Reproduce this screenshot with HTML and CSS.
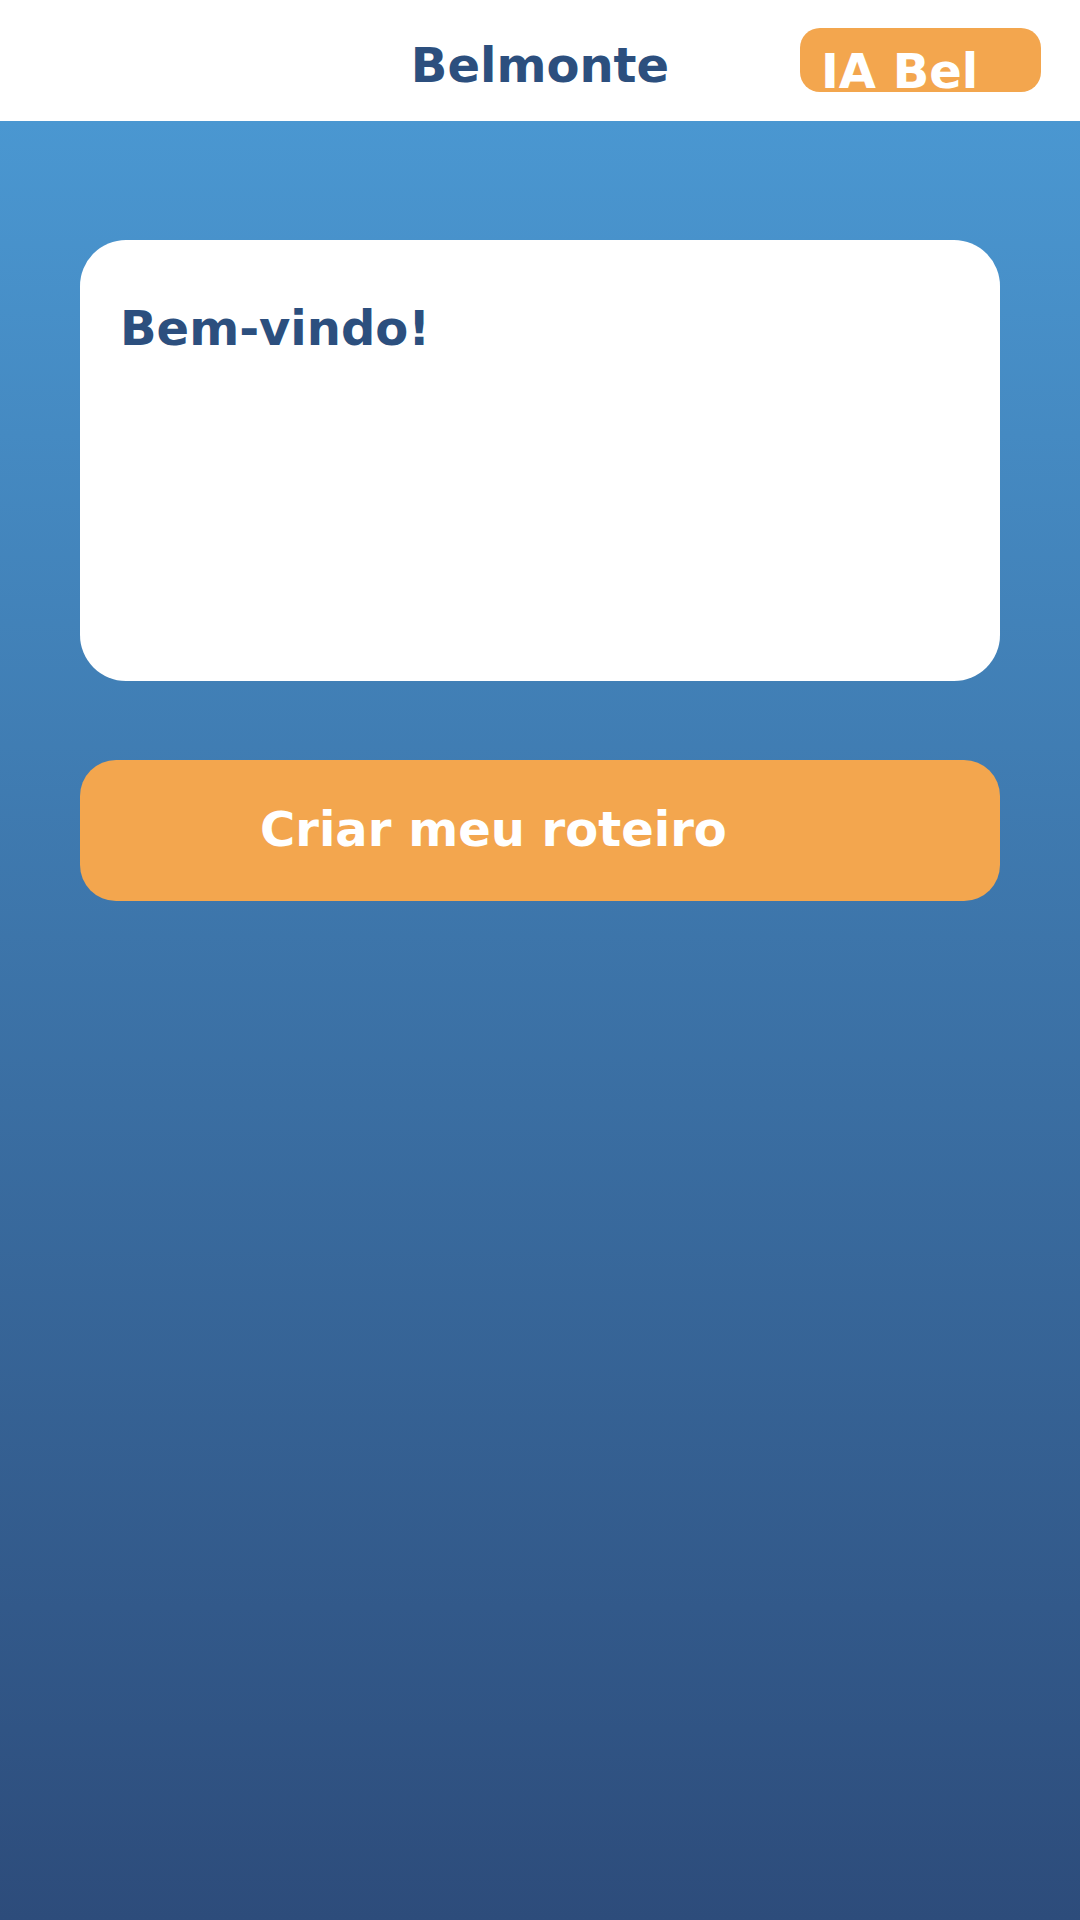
FILE: index.html
```html
<!DOCTYPE html>
<html lang="pt">
<head>
<meta charset="utf-8">
<title>Belmonte</title>
<link rel="stylesheet" href="styles.css">
</head>
<body>
<header class="topbar">
  <div class="spacer"></div>
  <h1 class="brand">Belmonte</h1>
  <div class="badge-wrap"><span class="badge">IA Bel</span></div>
</header>
<main class="content">
  <section class="card">
    <h2 class="card-title">Bem-vindo!</h2>
  </section>
  <button class="cta">Criar meu roteiro</button>
</main>
</body>
</html>
```
FILE: styles.css
```css
* { box-sizing: border-box; }
html, body { margin: 0; padding: 0; }
body {
  width: 1080px;
  min-height: 1920px;
  font-family: "DejaVu Sans", Verdana, sans-serif;
  background: linear-gradient(to bottom, #ffffff 0, #ffffff 121px, #4a97d1 121px, #2d4c7b 1920px);
  display: flex;
  flex-direction: column;
}
.topbar {
  height: 121px;
  background: #ffffff;
  display: grid;
  grid-template-columns: 1fr auto 1fr;
  align-items: start;
}
.brand {
  margin: 0;
  padding-top: 37px;
  font-size: 48px;
  font-weight: bold;
  color: #2c4f7e;
  line-height: normal;
  text-align: center;
}
.badge-wrap {
  display: flex;
  justify-content: flex-end;
  padding-top: 28px;
  padding-right: 39px;
}
.badge {
  display: block;
  width: 241px;
  height: 64px;
  padding: 15px 0 0 21px;
  border-radius: 20px;
  background: #f3a64e;
  color: #ffffff;
  font-size: 48px;
  font-weight: bold;
  line-height: normal;
  white-space: nowrap;
}
.content {
  padding: 119px 80px 0 80px;
  display: flex;
  flex-direction: column;
  gap: 79px;
}
.card {
  height: 441px;
  background: #ffffff;
  border-radius: 46px;
  padding: 60px 40px 0 40px;
}
.card-title {
  margin: 0;
  font-size: 48px;
  font-weight: bold;
  color: #2c4f7e;
  line-height: normal;
}
.cta {
  height: 141px;
  border: none;
  border-radius: 36px;
  background: #f3a64e;
  color: #ffffff;
  font-family: "DejaVu Sans", Verdana, sans-serif;
  font-size: 48px;
  font-weight: bold;
  text-align: left;
  padding: 0 0 4px 180px;
  line-height: normal;
}
```
